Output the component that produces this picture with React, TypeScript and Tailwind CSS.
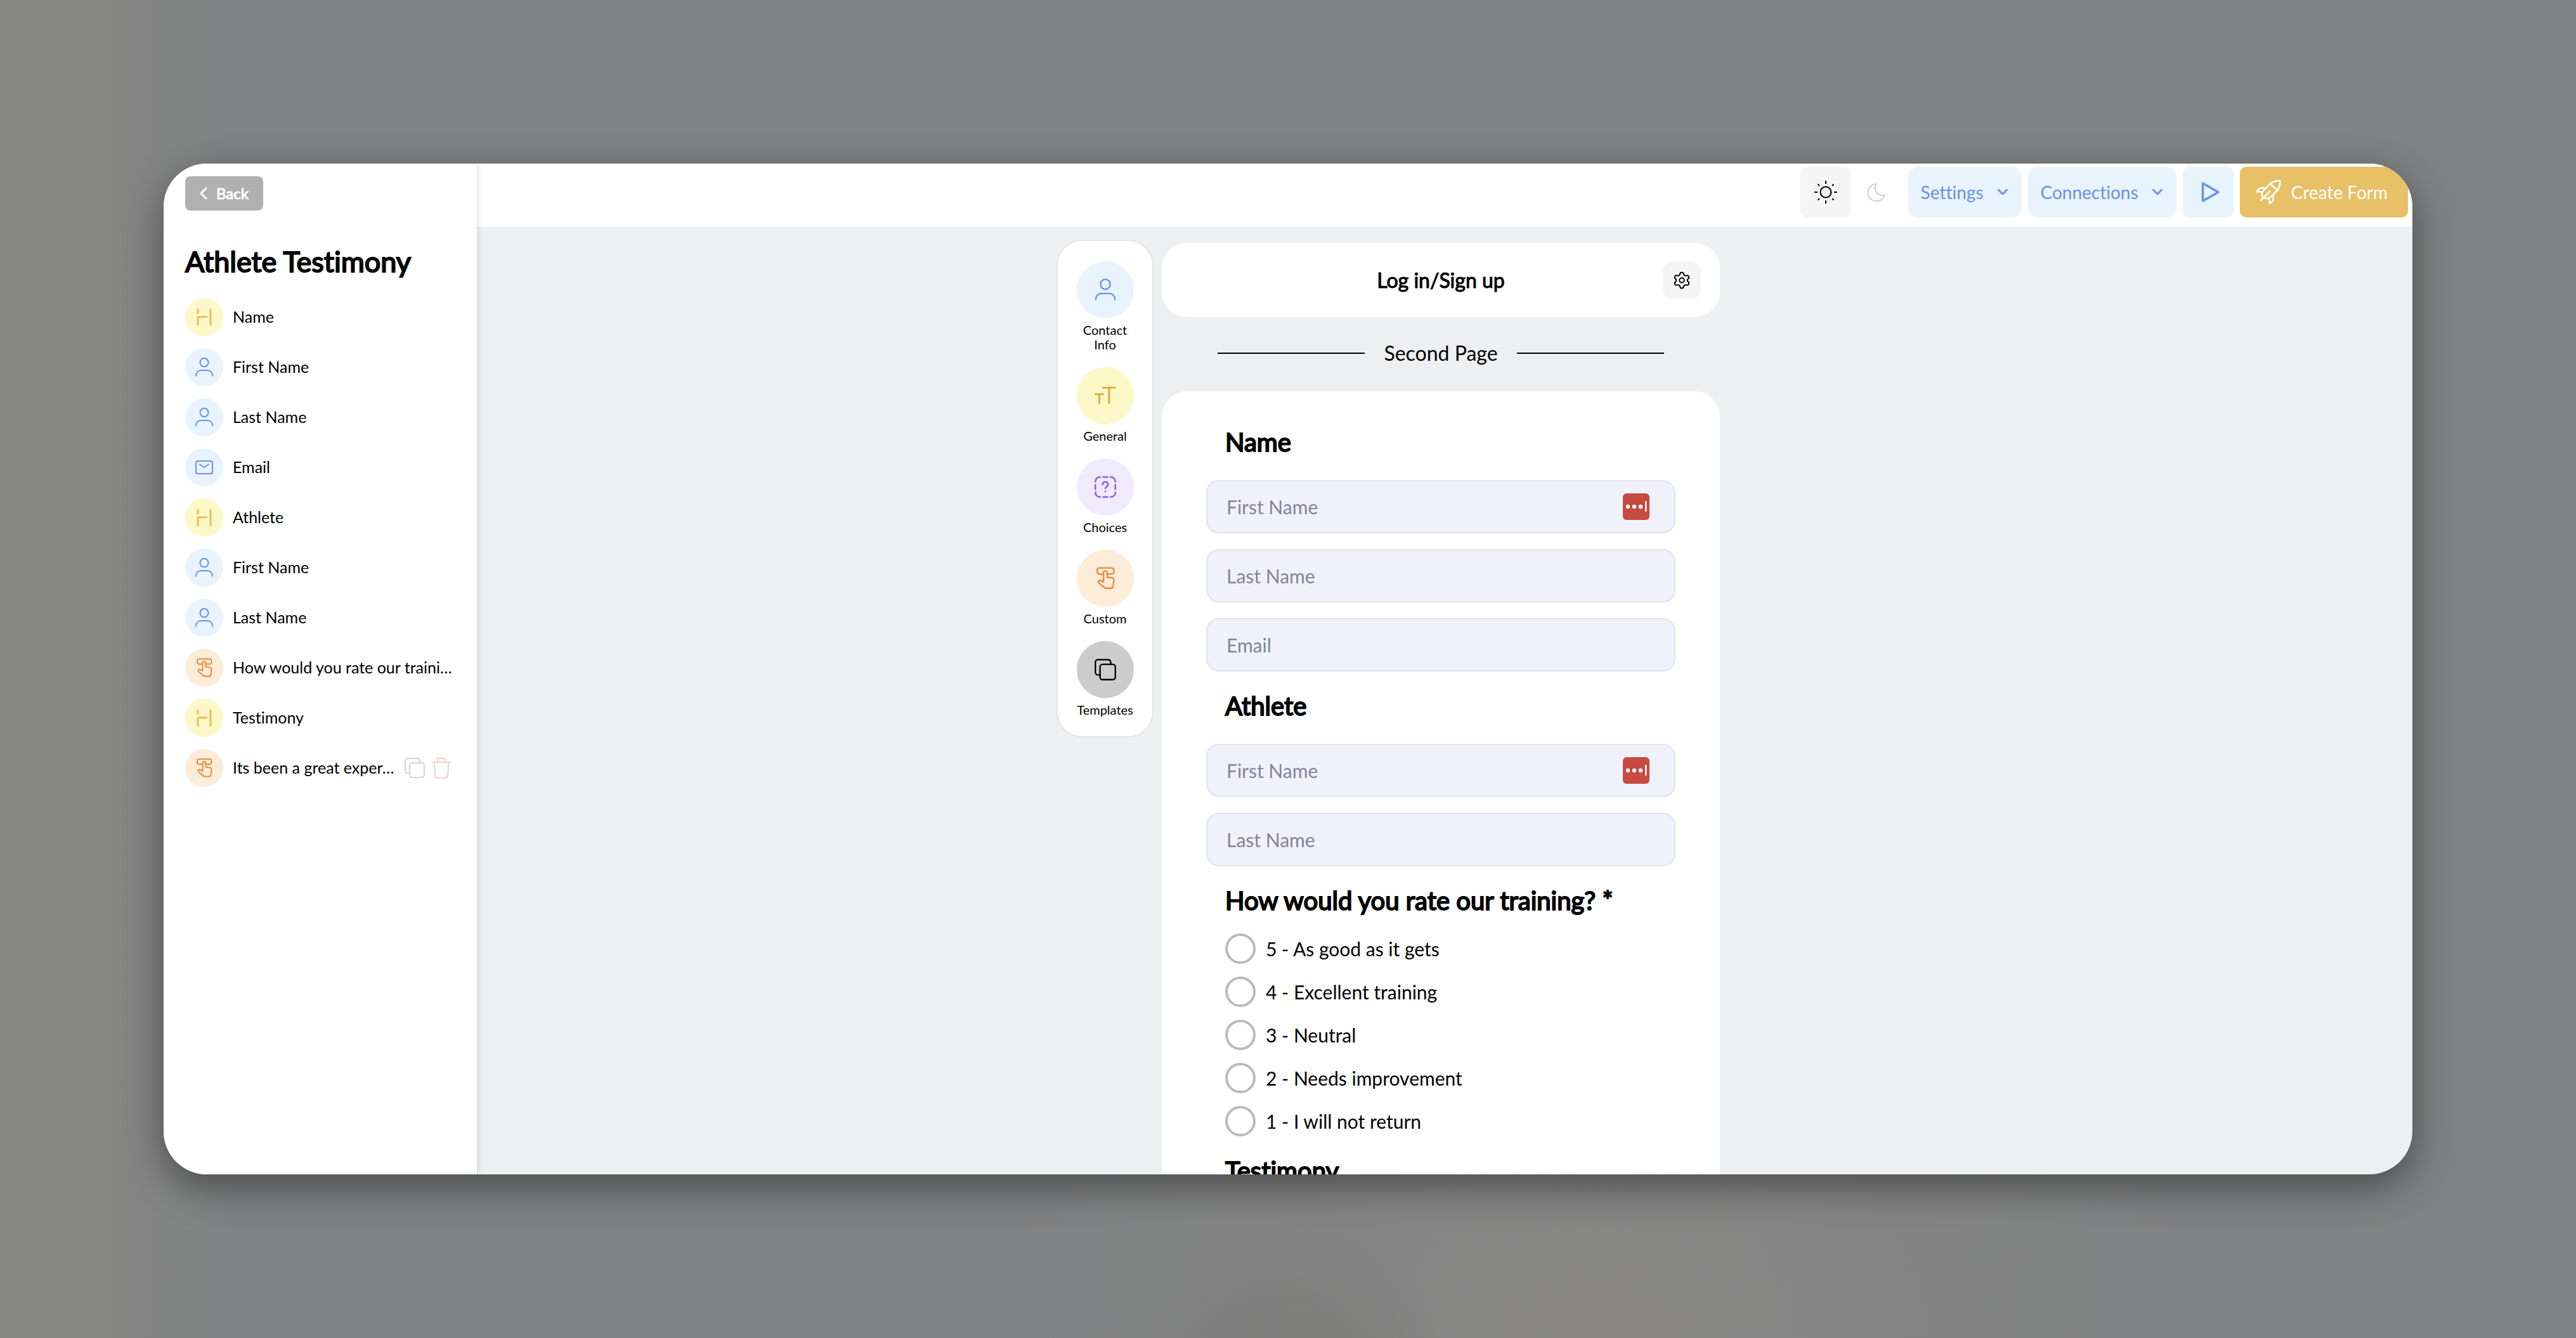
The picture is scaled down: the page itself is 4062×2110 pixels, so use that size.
import { useState } from "react";
import { Settings } from "lucide-react";

type IconName = "heading" | "person" | "mail" | "touch" | "text" | "choice" | "copy";

type FieldItem = {
  id: number;
  icon: IconName;
  label: string;
  actions?: boolean;
};

const fieldItems: FieldItem[] = [
  { id: 1, icon: "heading", label: "Name" },
  { id: 2, icon: "person", label: "First Name" },
  { id: 3, icon: "person", label: "Last Name" },
  { id: 4, icon: "mail", label: "Email" },
  { id: 5, icon: "heading", label: "Athlete" },
  { id: 6, icon: "person", label: "First Name" },
  { id: 7, icon: "person", label: "Last Name" },
  { id: 8, icon: "touch", label: "How would you rate our traini…" },
  { id: 9, icon: "heading", label: "Testimony" },
  { id: 10, icon: "touch", label: "Its been a great exper…", actions: true },
];

const tools: { icon: IconName; label: string }[] = [
  { icon: "person", label: "Contact Info" },
  { icon: "text", label: "General" },
  { icon: "choice", label: "Choices" },
  { icon: "touch", label: "Custom" },
  { icon: "copy", label: "Templates" },
];

const ratings = [
  "5 - As good as it gets",
  "4 - Excellent training",
  "3 - Neutral",
  "2 - Needs improvement",
  "1 - I will not return",
];

const tones: Record<IconName, string> = {
  heading: "bg-[#fdf8c8] text-[#e8bd62]",
  person: "bg-[#e8f3fe] text-[#6a90ea]",
  mail: "bg-[#e8f3fe] text-[#6a90ea]",
  touch: "bg-[#fdecd8] text-[#e58b3c]",
  text: "bg-[#fdf8c8] text-[#e2aa3f]",
  choice: "bg-[#efeafc] text-[#8b5fdc]",
  copy: "bg-[#cccccc] text-black",
};

function Icon({ name, className }: { name: IconName; className?: string }) {
  return (
    <svg
      viewBox="0 0 36 36"
      fill="none"
      stroke="currentColor"
      strokeWidth="2"
      strokeLinecap="round"
      strokeLinejoin="round"
      className={className}
      aria-hidden="true"
    >
      {name === "heading" && <path strokeWidth="3" d="M8 6v5.500M8 30.500V17.800h14M28 6v24.500" />}
      {name === "person" && (
        <>
          <ellipse cx="18" cy="10.500" rx="6.500" ry="6.800" />
          <path d="M5 31.500c0-5 3-8.500 8-8.500h10c5 0 8 3.500 8 8.500" />
        </>
      )}
      {name === "mail" && (
        <>
          <rect x="5" y="8" width="26" height="20" rx="3" />
          <path d="m11 13.500 7 4.500 7-4.500" />
        </>
      )}
      {name === "touch" && (
        <>
          <path d="M15.500 12.200H10a3 3 0 0 1-3-3V7a3 3 0 0 1 3-3h16.500a3 3 0 0 1 3 3v2.200a3 3 0 0 1-3 3h-6" />
          <path d="M15.500 22.800V10.500a2.500 2.500 0 0 1 5 0v6l6.200.9c1.900.3 3 1.600 2.800 3.500l-1 7.600c-.3 1.800-1.500 3-3.300 3h-6c-1 0-1.800-.3-2.500-1L9.200 24.300c-1.700-2 .3-4.500 2.600-3.300z" />
        </>
      )}
      {name === "text" && (
        <path strokeWidth="2.500" d="M4.500 16H15M9.700 16v12M14.500 7.200h17M23 7.200V28" />
      )}
      {name === "choice" && (
        <g strokeWidth="2.200">
          <path d="M4.500 11c0-4 2.500-6.500 6.500-6.500M15 4.500h6M25 4.500c4 0 6.500 2.500 6.500 6.500M31.500 15v6M31.500 25c0 4-2.500 6.500-6.500 6.500M21 31.500h-6M11 31.500c-4 0-6.500-2.500-6.500-6.500M4.500 21v-6" />
          <path d="M14.300 14.800c0-2.200 1.500-3.600 3.700-3.600s3.700 1.400 3.700 3.400c0 2.700-3.300 2.800-3.700 5.200M18 23.800v.2" />
        </g>
      )}
      {name === "copy" && (
        <>
          <rect x="10.800" y="10.800" width="20.700" height="20.700" rx="3.500" />
          <path d="M10.800 25.200H8a3.500 3.500 0 0 1-3.500-3.500V8A3.500 3.500 0 0 1 8 4.500h13.700A3.500 3.500 0 0 1 25.200 8v2.800" />
        </>
      )}
    </svg>
  );
}

function TrashIcon() {
  return (
    <svg viewBox="0 0 36 36" fill="none" stroke="currentColor" strokeWidth="2" strokeLinecap="round" strokeLinejoin="round" className="size-9" aria-hidden="true">
      <path d="M4 9h28M11.500 9V5.500a2.500 2.500 0 0 1 2.500-2.500h8a2.500 2.500 0 0 1 2.500 2.500V9M6.500 9.500l1.500 21a3.500 3.500 0 0 0 3.500 3.200h13a3.500 3.500 0 0 0 3.500-3.200l1.500-21" />
    </svg>
  );
}

function ChevronDown() {
  return (
    <svg viewBox="0 0 20 20" fill="none" stroke="currentColor" strokeWidth="3" strokeLinecap="round" strokeLinejoin="round" className="size-5" aria-hidden="true">
      <path d="m3.500 6.500 6.500 6.500 6.500-6.500" />
    </svg>
  );
}

function Sidebar() {
  return (
    <aside className="relative z-10 flex w-[494px] shrink-0 flex-col bg-white pt-5 pr-[38px] pl-[34px] shadow-[0_0_10px_rgba(0,0,0,0.16)]">
      <button className="flex h-[54px] items-center gap-[14px] self-start rounded-lg bg-[#b0b0b0] px-[23px] text-2xl text-white [-webkit-text-stroke:1px]">
        <svg viewBox="0 0 12 20" fill="none" stroke="currentColor" strokeWidth="3" strokeLinecap="round" strokeLinejoin="round" className="h-5 w-3" aria-hidden="true">
          <path d="M10 2 2 10l8 8" />
        </svg>
        Back
      </button>
      <h1 className="mt-[53px] text-[45px] leading-[54px] [-webkit-text-stroke:2px]">Athlete Testimony</h1>
      <ul className="mt-[31px] flex flex-col gap-[19px]">
        {fieldItems.map((item) => (
          <li key={item.id} className="flex h-15 items-center gap-[15px] text-[25px]">
            <span className={`flex size-15 shrink-0 items-center justify-center rounded-full ${tones[item.icon]}`}>
              <Icon name={item.icon} className="size-9" />
            </span>
            <span className="min-w-0 flex-1 whitespace-nowrap">{item.label}</span>
            {item.actions && (
              <span className="-ml-2 flex items-center gap-1">
                <button aria-label="Duplicate" className="text-[#d6d6d6]">
                  <Icon name="copy" className="size-10" />
                </button>
                <button aria-label="Delete" className="text-[#f6cfcb]">
                  <TrashIcon />
                </button>
              </span>
            )}
          </li>
        ))}
      </ul>
    </aside>
  );
}

function Header() {
  return (
    <header className="flex h-[100px] shrink-0 items-start justify-end gap-[10px] bg-white pt-[5px] pr-[7px] text-[28px] text-[#6a90ea]">
      <div className="flex">
        <button aria-label="Light mode" className="flex size-20 items-center justify-center rounded-[10px] bg-[#f5f5f5] text-black">
          <svg viewBox="0 0 36 36" fill="none" stroke="currentColor" strokeWidth="2" className="size-9" aria-hidden="true">
            <circle cx="18" cy="18" r="8.500" />
            <path d="M18 0v5M18 31v5M0 18h5M31 18h5M5.500 5.500 8 8M28 28l2.500 2.500M5.500 30.500 8 28M28 8l2.500-2.500" />
          </svg>
        </button>
        <button aria-label="Dark mode" className="flex size-20 items-center justify-center text-[#cfcfcf]">
          <svg viewBox="0 0 36 36" fill="none" stroke="currentColor" strokeWidth="2" strokeLinejoin="round" className="size-9" aria-hidden="true">
            <path d="M17.500 5C14.300 12.500 16.300 18.500 21 21.500c3.300 2 6.800 1.900 10 1.200A13.600 13.600 0 1 1 17.500 5z" />
          </svg>
        </button>
      </div>
      <button className="flex h-20 items-center gap-5 rounded-2xl bg-[#e8f3fe] px-5">
        Settings
        <ChevronDown />
      </button>
      <button className="flex h-20 items-center gap-5 rounded-2xl bg-[#e8f3fe] px-5">
        Connections
        <ChevronDown />
      </button>
      <button aria-label="Preview" className="flex size-20 items-center justify-center rounded-[10px] bg-[#e8f3fe]">
        <svg viewBox="0 0 40 40" fill="none" stroke="currentColor" strokeWidth="3.500" strokeLinejoin="round" className="size-10" aria-hidden="true">
          <path d="M11.500 6v28L36 20z" />
        </svg>
      </button>
      <button className="flex h-20 items-center gap-4 rounded-[10px] bg-[#e7c067] pr-8 pl-[25px] text-white">
        <svg viewBox="0 0 40 40" fill="none" stroke="currentColor" strokeWidth="2.500" strokeLinecap="round" strokeLinejoin="round" className="size-10" aria-hidden="true">
          <path d="M22.500 7C27 3.500 32 2 36.500 2c1.300 0 2 .8 2 2C38.500 9 37 13 34 17.500L23 28c-4 2-9.500 2-11.500.5S9 22 11.500 18.500z" />
          <path d="m23 7 11 10M22.500 18.500 8 33" />
          <path d="M14.500 13.500H9c-3 0-5.500 2.500-7 6 3-1 6-.5 8 1.500M27.500 24.500V31c0 3-3 5.500-6 7 .8-3 0-6-1.500-8" />
        </svg>
        Create Form
      </button>
    </header>
  );
}

function ToolPanel() {
  return (
    <nav className="flex w-[153px] shrink-0 flex-col items-center gap-6 self-start rounded-[40px] border-2 border-[#e5e5e5] bg-white pt-8 pb-[30px]">
      {tools.map((tool) => (
        <button key={tool.label} className="flex w-[90px] flex-col items-center gap-[7px] text-xl leading-[23px]">
          <span className={`flex size-[90px] items-center justify-center rounded-full ${tones[tool.icon]}`}>
            <Icon name={tool.icon} className="size-[42px]" />
          </span>
          {tool.label}
        </button>
      ))}
    </nav>
  );
}

function TextField({ id, label, autofill }: { id: string; label: string; autofill?: boolean }) {
  return (
    <div className="relative">
      <input
        id={id}
        type="text"
        placeholder={label}
        aria-label={label}
        className="block h-[84px] w-full rounded-[20px] border-2 border-[#e2e1ee] bg-[#f1f1fb] px-[30px] text-[30px] placeholder:text-[#85849c]"
      />
      {autofill && (
        <svg viewBox="0 0 42 42" className="absolute top-[21px] right-[41px] size-[42px]" aria-hidden="true">
          <rect width="42" height="42" rx="6" fill="#c74b40" />
          <g fill="#fff">
            <circle cx="8" cy="21" r="3.200" />
            <circle cx="18" cy="21" r="3.200" />
            <circle cx="28" cy="21" r="3.200" />
            <rect x="35" y="12" width="2.500" height="17" rx="1" />
          </g>
        </svg>
      )}
    </div>
  );
}

function FormTitle({ children }: { children: string }) {
  return <h2 className="px-[30px] text-[40px] leading-12 [-webkit-text-stroke:2px]">{children}</h2>;
}

function FormPreview() {
  const [rating, setRating] = useState("");

  return (
    <main className="flex w-[880px] flex-col">
      <section className="mt-[5px] grid h-[117px] shrink-0 grid-cols-[1fr_auto_1fr] items-center rounded-[40px] bg-white px-[30px]">
        <h2 className="col-start-2 text-[32px] [-webkit-text-stroke:1px]">Log in/Sign up</h2>
        <button aria-label="Login settings" className="flex size-15 items-center justify-center justify-self-end rounded-2xl bg-[#f5f5f5]">
          <Settings className="size-[30px]" strokeWidth={1.6} />
        </button>
      </section>

      <div className="mb-1 flex h-[113px] shrink-0 items-center gap-[30px] px-[88px] text-[32px]">
        <hr className="flex-1 border-t-2 border-black" />
        Second Page
        <hr className="flex-1 border-t-2 border-black" />
      </div>

      <section className="shrink-0 rounded-t-[40px] bg-white px-[70px] pt-14 pb-16">
        <FormTitle>Name</FormTitle>
        <div className="mt-9 mb-[30px] flex flex-col gap-[25px]">
          <TextField id="first-name" label="First Name" autofill />
          <TextField id="last-name" label="Last Name" />
          <TextField id="email" label="Email" />
        </div>

        <FormTitle>Athlete</FormTitle>
        <div className="mt-9 mb-[30px] flex flex-col gap-[25px]">
          <TextField id="athlete-first-name" label="First Name" autofill />
          <TextField id="athlete-last-name" label="Last Name" />
        </div>

        <FormTitle>How would you rate our training? *</FormTitle>
        <div className="mt-7 mb-[30px] flex flex-col gap-5 px-[30px]">
          {ratings.map((option) => (
            <label key={option} className="flex h-12 items-center gap-4 text-[30px]">
              <input
                type="radio"
                name="rating"
                value={option}
                checked={rating === option}
                onChange={() => setRating(option)}
                className="size-12 shrink-0 appearance-none rounded-full border-4 border-[#bababa] checked:border-[#6a90ea]"
              />
              {option}
            </label>
          ))}
        </div>

        <FormTitle>Testimony</FormTitle>
      </section>
    </main>
  );
}

export default function App() {
  return (
    <div className="flex h-screen bg-[#808182] bg-[radial-gradient(ellipse_at_50%_104%,#7a7a79_0%,transparent_9%),radial-gradient(ellipse_at_62%_100%,#898887_0%,transparent_26%),linear-gradient(90deg,#888887_0%,#868685_4%,transparent_9%)] p-[258px] font-['Lato','Noto_Sans',sans-serif] text-black [font-variant-ligatures:none]">
      <div className="flex min-w-0 flex-1 overflow-hidden rounded-[68px] bg-[#eeeff1] shadow-[0_20px_60px_rgba(0,0,0,0.42)]">
        <Sidebar />
        <div className="flex min-w-0 flex-1 flex-col">
          <Header />
          <div className="flex min-h-0 flex-1 justify-center gap-[13px] overflow-hidden pt-5 pr-[178px]">
            <ToolPanel />
            <FormPreview />
          </div>
        </div>
      </div>
    </div>
  );
}
